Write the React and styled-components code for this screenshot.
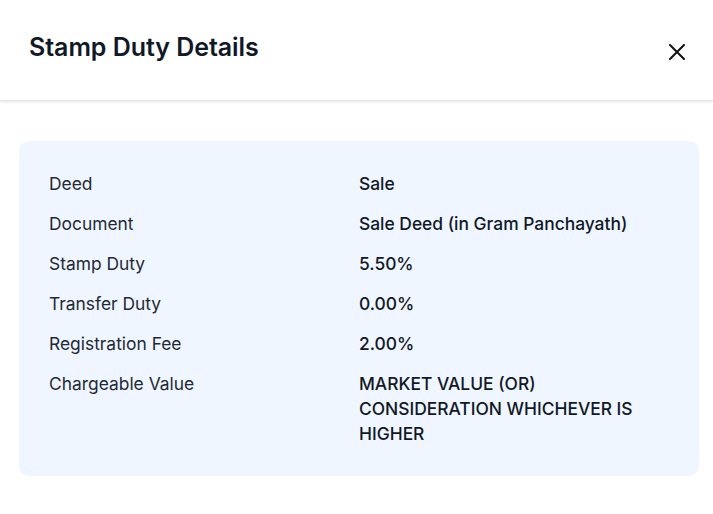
import React from "react";
import styled, { createGlobalStyle } from "styled-components";

const Global = createGlobalStyle`
  html, body { margin: 0; padding: 0; background: #ffffff; }
  body { font-family: Inter, "Noto Sans", sans-serif; }
  * { box-sizing: border-box; }
`;

const Modal = styled.div`
  width: 713px;
  height: 514px;
  background: #ffffff;
  display: flex;
  flex-direction: column;
  overflow: hidden;
`;

const Header = styled.header`
  height: 101px;
  flex: none;
  display: flex;
  align-items: center;
  justify-content: space-between;
  padding: 0 24px 6px 29px;
  border-bottom: 1px solid #e2e4e8;
  box-shadow: 0 1px 3px rgba(0, 0, 0, 0.1);
`;

const Title = styled.h2`
  margin: 0;
  font-size: 25px;
  font-weight: 600;
  color: #111827;
  letter-spacing: -0.05px;
`;

const CloseButton = styled.button`
  border: 0;
  background: transparent;
  padding: 0;
  width: 24px;
  height: 24px;
  display: flex;
  align-items: center;
  justify-content: center;
  margin-top: 10px;
  color: #111111;
  cursor: pointer;
`;

const Body = styled.div`
  padding: 40px 14px 0 19px;
`;

const Card = styled.div`
  background: #eff6ff;
  border-radius: 10px;
  padding: 30px;
  display: grid;
  grid-template-columns: 310px 1fr;
  row-gap: 15px;
`;

const Label = styled.div`
  font-size: 17.4px;
  line-height: 25px;
  color: #1f2937;
`;

const Value = styled.div`
  font-size: 17.4px;
  line-height: 25px;
  font-weight: 500;
  color: #111827;
  max-width: 300px;
`;

const rows = [
  ["Deed", "Sale"],
  ["Document", "Sale Deed (in Gram Panchayath)"],
  ["Stamp Duty", "5.50%"],
  ["Transfer Duty", "0.00%"],
  ["Registration Fee", "2.00%"],
  ["Chargeable Value", "MARKET VALUE (OR) CONSIDERATION WHICHEVER IS HIGHER"],
];

export default function App() {
  return (
    <>
      <Global />
      <Modal>
        <Header>
          <Title>Stamp Duty Details</Title>
          <CloseButton aria-label="Close">
            <svg width="18" height="18" viewBox="0 0 18 18" fill="none">
              <path d="M2 2L16 16M16 2L2 16" stroke="currentColor" strokeWidth="2" strokeLinecap="round" />
            </svg>
          </CloseButton>
        </Header>
        <Body>
          <Card>
            {rows.map(([l, v]) => (
              <React.Fragment key={l}>
                <Label>{l}</Label>
                <Value>{v}</Value>
              </React.Fragment>
            ))}
          </Card>
        </Body>
      </Modal>
    </>
  );
}
